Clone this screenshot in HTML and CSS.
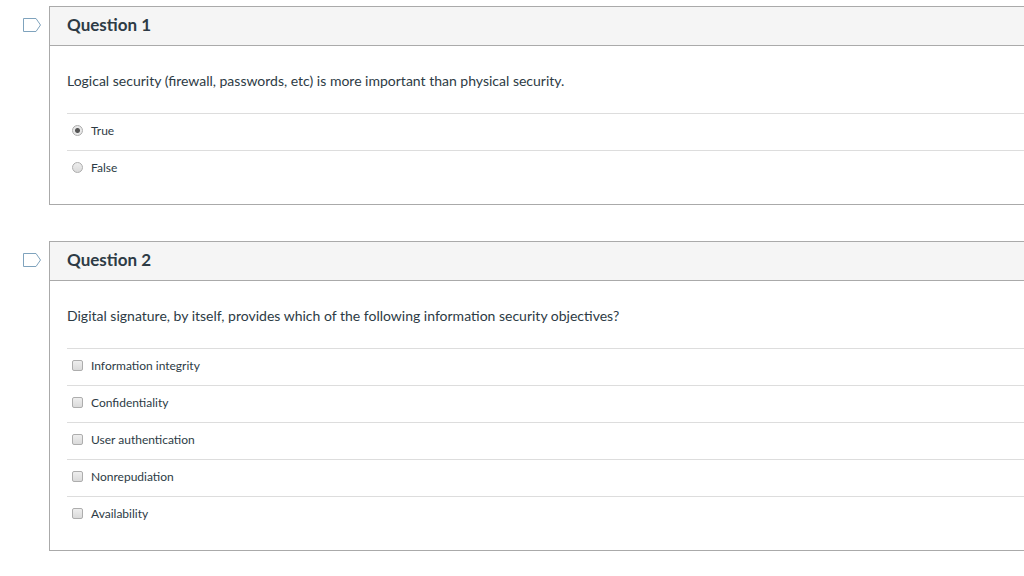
FILE: index.html
```html
<!DOCTYPE html>
<html lang="en">
<head>
<meta charset="utf-8">
<title>Quiz</title>
<link rel="stylesheet" href="styles.css">
</head>
<body>
<main class="quiz">
  <section class="row">
    <button class="flag" type="button" aria-label="Flag question 1"><svg width="18" height="15" viewBox="0 0 18 15"><path d="M.5 .5H13L17.5 7L13 13.5H.5Z"/></svg></button>
    <div class="question">
      <h2 class="title">Question 1</h2>
      <fieldset class="body">
        <legend class="prompt">Logical security (firewall, passwords, etc) is more important than physical security.</legend>
        <label class="answer"><input class="control radio" type="radio" name="q1" checked><span>True</span></label>
        <label class="answer"><input class="control radio" type="radio" name="q1"><span>False</span></label>
      </fieldset>
    </div>
  </section>
  <section class="row">
    <button class="flag" type="button" aria-label="Flag question 2"><svg width="18" height="15" viewBox="0 0 18 15"><path d="M.5 .5H13L17.5 7L13 13.5H.5Z"/></svg></button>
    <div class="question">
      <h2 class="title">Question 2</h2>
      <fieldset class="body">
        <legend class="prompt">Digital signature, by itself, provides which of the following information security objectives?</legend>
        <label class="answer"><input class="control check" type="checkbox"><span>Information integrity</span></label>
        <label class="answer"><input class="control check" type="checkbox"><span>Confidentiality</span></label>
        <label class="answer"><input class="control check" type="checkbox"><span>User authentication</span></label>
        <label class="answer"><input class="control check" type="checkbox"><span>Nonrepudiation</span></label>
        <label class="answer"><input class="control check" type="checkbox"><span>Availability</span></label>
      </fieldset>
    </div>
  </section>
</main>
</body>
</html>
```

FILE: styles.css
```css
* { box-sizing: border-box; }
body {
  margin: 0;
  background: #fff;
  color: #2d3b45;
  font-family: Lato, "Liberation Sans", sans-serif;
}
.quiz {
  display: flex;
  flex-direction: column;
  gap: 36px;
  padding: 6px 0 24px 23px;
}
.row { display: flex; align-items: flex-start; gap: 8px; }
.flag {
  flex: none;
  display: flex;
  margin-top: 12px;
  padding: 0;
  border: 0;
  background: none;
}
.flag path { fill: #fff; stroke: #7fa3bd; }
.question {
  flex: 1;
  border: 1px solid #aaa;
  border-right: 0;
}
.title {
  margin: 0;
  padding: 0 17px 2px;
  border-bottom: 1px solid #aaa;
  background: #f5f5f5;
  font-size: 17px;
  font-weight: 700;
  line-height: 36px;
}
.body {
  margin: 0;
  padding: 0 0 17px 17px;
  border: 0;
}
.prompt {
  padding: 24px 0 21px;
  font-size: 14px;
  line-height: 22px;
}
.answer {
  display: flex;
  align-items: center;
  gap: 8px;
  min-height: 37px;
  padding: 0 5px 2px;
  border-top: 1px solid #ddd;
  font-size: 12px;
  line-height: 18px;
}
.control {
  appearance: none;
  flex: none;
  width: 11px;
  height: 11px;
  margin: 0 0 2px;
  border: 1px solid #adadad;
  background: linear-gradient(#eee, #dadada);
}
.radio { border-radius: 50%; }
.radio:checked { background: radial-gradient(circle, #555 0 2px, #e8e8e8 3px); }
.check { border-radius: 2px; }
```
